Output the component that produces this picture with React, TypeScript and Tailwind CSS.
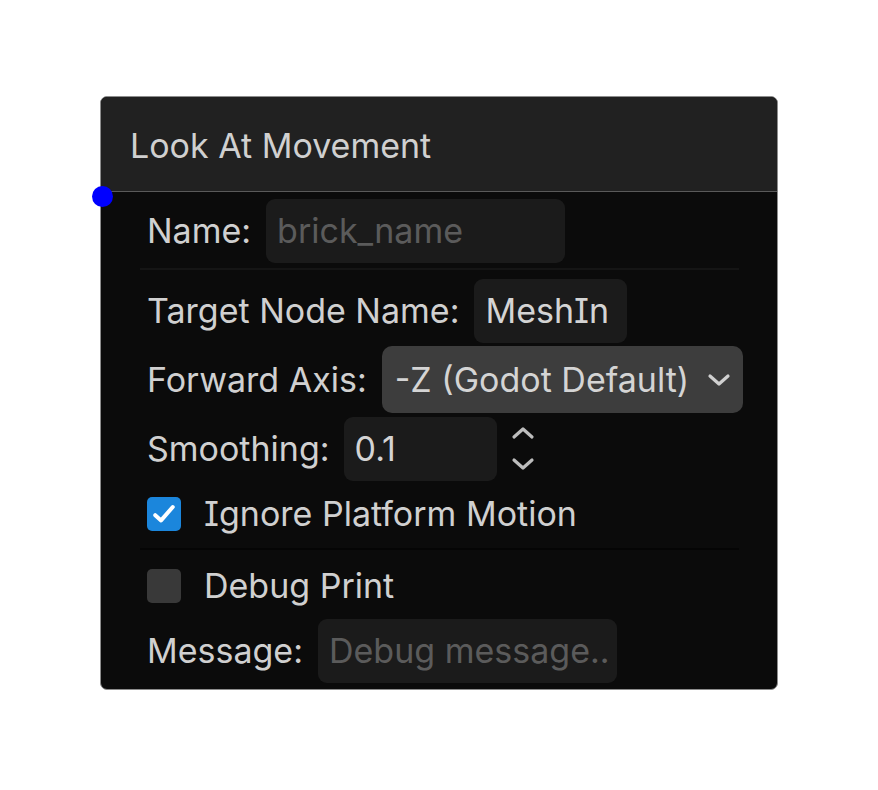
import React from "react";

const font = "font-['Inter','Noto_Sans',sans-serif] [font-feature-settings:'cv08']";

function ChevronDown({ className = "" }: { className?: string }) {
  return (
    <svg viewBox="0 0 24 14" className={className} fill="none" stroke="currentColor" strokeWidth={3.2} strokeLinecap="round" strokeLinejoin="round">
      <path d="M3 3l9 8 9-8" />
    </svg>
  );
}

function ChevronUp({ className = "" }: { className?: string }) {
  return (
    <svg viewBox="0 0 24 14" className={className} fill="none" stroke="currentColor" strokeWidth={3.2} strokeLinecap="round" strokeLinejoin="round">
      <path d="M3 11l9-8 9 8" />
    </svg>
  );
}

function Label({ children }: { children: React.ReactNode }) {
  return <span className="text-[34px] text-[#d0d0d0] whitespace-nowrap leading-none">{children}</span>;
}

function TextBox({ value, placeholder, width }: { value?: string; placeholder?: string; width: string }) {
  return (
    <div className={`h-[64px] ${width} shrink-0 rounded-[9px] bg-[#1b1b1b] pl-[11px] flex items-center overflow-hidden`}>
      {value ? (
        <span className="text-[34px] text-[#d4d4d4] leading-none whitespace-nowrap">{value}</span>
      ) : (
        <span className="text-[34px] text-[#5b5b5b] leading-none whitespace-nowrap">{placeholder}</span>
      )}
    </div>
  );
}

function Check({ checked }: { checked: boolean }) {
  return checked ? (
    <div className="w-[34px] h-[34px] shrink-0 rounded-[5px] bg-[#1b86dc] flex items-center justify-center">
      <svg viewBox="0 0 24 24" className="w-[28px] h-[28px]" fill="none" stroke="white" strokeWidth={3.4} strokeLinecap="round" strokeLinejoin="round">
        <path d="M4.5 13l5 4.5L19.5 6" />
      </svg>
    </div>
  ) : (
    <div className="w-[34px] h-[34px] shrink-0 rounded-[5px] bg-[#393939]" />
  );
}

export default function App() {
  return (
    <div className={`w-[878px] h-[790px] bg-white pt-[96px] pl-[100px] ${font}`}>
      <div className="relative w-[678px] h-[594px] rounded-[7px] border border-[#8d8d8d] bg-[#0b0b0b] flex flex-col">
        {/* header */}
        <div className="h-[95px] shrink-0 rounded-t-[6px] bg-[#212121] border-b border-[#5a5a5a] flex items-center pl-[29px] pt-[3px]">
          <span className="text-[34px] text-[#d0d0d0] leading-none">Look At Movement</span>
        </div>
        {/* connection port */}
        <div className="absolute left-[-9px] top-[89px] w-[21px] h-[21px] rounded-full bg-[#0000ff]" />

        {/* body */}
        <div className="flex flex-col pl-[39px] pr-[38px] pt-[7px]">
          <div className="h-[64px] flex items-center gap-[15px] pl-[7px]">
            <Label>Name:</Label>
            <TextBox placeholder="brick_name" width="w-[299px]" />
          </div>

          <div className="mt-[5px] h-[2px] bg-[#151515]" />

          <div className="mt-[9px] h-[64px] flex items-center gap-[15px] pl-[7px]">
            <Label>Target Node Name:</Label>
            <TextBox value="MeshIn" width="w-[153px]" />
          </div>

          <div className="mt-[3px] h-[67px] flex items-center gap-[15px] pl-[7px]">
            <Label>Forward Axis:</Label>
            <div className="h-[67px] w-[361px] shrink-0 rounded-[10px] bg-[#3d3d3d] pl-[13px] pr-[12px] flex items-center justify-between">
              <span className="text-[34px] text-[#d4d4d4] leading-none whitespace-nowrap">-Z (Godot Default)</span>
              <ChevronDown className="w-[24px] h-[14px] shrink-0 text-[#d0d0d0]" />
            </div>
          </div>

          <div className="mt-[3px] h-[65px] flex items-center gap-[14px] pl-[7px]">
            <Label>Smoothing:</Label>
            <TextBox value="0.1" width="w-[153px]" />
            <div className="flex flex-col items-center gap-[17px]">
              <ChevronUp className="w-[24px] h-[14px] text-[#bdbdbd]" />
              <ChevronDown className="w-[24px] h-[14px] text-[#bdbdbd]" />
            </div>
          </div>

          <div className="mt-[2px] h-[62px] flex items-center gap-[23px] pl-[7px]">
            <Check checked />
            <Label>Ignore Platform Motion</Label>
          </div>

          <div className="mt-[3px] h-[2px] bg-[#050505]" />

          <div className="mt-[4px] h-[64px] flex items-center gap-[23px] pl-[7px]">
            <Check checked={false} />
            <Label>Debug Print</Label>
          </div>

          <div className="mt-[1px] h-[64px] flex items-center gap-[15px] pl-[7px]">
            <Label>Message:</Label>
            <TextBox placeholder="Debug message.." width="w-[299px]" />
          </div>
        </div>
      </div>
    </div>
  );
}
